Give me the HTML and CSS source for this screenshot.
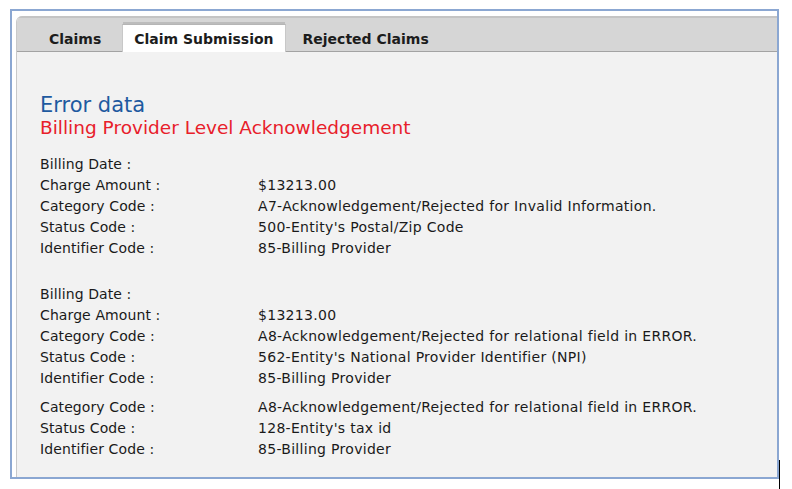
FILE: index.html
```html
<!DOCTYPE html>
<html lang="en">

<head>
    <meta charset="UTF-8">
    <meta name="viewport" content="width=device-width, initial-scale=1.0">
    <title>Claim Submission</title>
    <link rel="stylesheet" href="styles.css">
</head>

<body>

    <div class="frame">
        <div class="panel">

            <div class="tabbar">
                <span class="tab first">Claims</span>
                <span class="tab active">Claim Submission</span>
                <span class="tab">Rejected Claims</span>
            </div>

            <div class="content">
                <h2 class="error-title">Error data</h2>
                <h3 class="error-sub">Billing Provider Level Acknowledgement</h3>

                <div class="block">
                    <div class="row"><span class="lbl">Billing Date :</span><span class="val"></span></div>
                    <div class="row"><span class="lbl">Charge Amount :</span><span class="val">$13213.00</span></div>
                    <div class="row"><span class="lbl">Category Code :</span><span class="val">A7-Acknowledgement/Rejected for Invalid Information.</span></div>
                    <div class="row"><span class="lbl">Status Code :</span><span class="val">500-Entity's Postal/Zip Code</span></div>
                    <div class="row"><span class="lbl">Identifier Code :</span><span class="val">85-Billing Provider</span></div>
                </div>

                <div class="block">
                    <div class="row"><span class="lbl">Billing Date :</span><span class="val"></span></div>
                    <div class="row"><span class="lbl">Charge Amount :</span><span class="val">$13213.00</span></div>
                    <div class="row"><span class="lbl">Category Code :</span><span class="val">A8-Acknowledgement/Rejected for relational field in ERROR.</span></div>
                    <div class="row"><span class="lbl">Status Code :</span><span class="val">562-Entity's National Provider Identifier (NPI)</span></div>
                    <div class="row"><span class="lbl">Identifier Code :</span><span class="val">85-Billing Provider</span></div>
                </div>

                <div class="block sub">
                    <div class="row"><span class="lbl">Category Code :</span><span class="val">A8-Acknowledgement/Rejected for relational field in ERROR.</span></div>
                    <div class="row"><span class="lbl">Status Code :</span><span class="val">128-Entity's tax id</span></div>
                    <div class="row"><span class="lbl">Identifier Code :</span><span class="val">85-Billing Provider</span></div>
                </div>
            </div>

        </div>
    </div>

    <div class="edge"></div>

</body>

</html>
```

FILE: styles.css
```css
body {
    margin: 0;
    background-color: white;
    font-family: "DejaVu Sans", Verdana, sans-serif;
    color: #1a1a1a;
}

.frame {
    width: 769px;
    height: 470px;
    margin: 9px 0 0 10px;
    border: 2px solid #8ba7d2;
    padding: 5px 0 0 4px;
    box-sizing: border-box;
    background: white;
}

.panel {
    height: 100%;
    background: #f2f2f2;
    border-top-left-radius: 6px;
    border-left: 1px solid #c9c9c9;
    overflow: hidden;
}

.tabbar {
    height: 36px;
    background: #d6d6d6;
    border-top: 2px solid #c4c4c4;
    border-bottom: 1px solid #a3a3a3;
    box-sizing: border-box;
    display: flex;
    align-items: flex-end;
    gap: 6px;
    padding-left: 21px;
}

.tab {
    font-size: 14px;
    font-weight: bold;
    padding: 0 11px;
    height: 27px;
    line-height: 29px;
    color: #1c1c1c;
    margin-bottom: -1px;
}

.tab.first {
    margin-right: 4px;
}

.tab.active {
    background: white;
    border-top: 1px solid #b5b5b5;
    border-left: 1px solid #c8c8c8;
    border-right: 1px solid #c8c8c8;
    box-shadow: 0 -3px 0 -1px #bcbcbc;
}

.content {
    padding: 41px 0 0 23px;
    font-size: 14px;
}

.error-title {
    font-size: 21px;
    font-weight: normal;
    color: #1e5aa0;
    margin: 0;
    line-height: 24px;
}

.error-sub {
    font-size: 18.5px;
    font-weight: normal;
    color: #e8202a;
    margin: 0 0 15px 0;
    line-height: 22px;
}

.block {
    margin-bottom: 25px;
}

.block.sub {
    margin-top: -17px;
}

.row {
    display: flex;
    height: 21px;
    line-height: 21px;
}

.lbl {
    width: 218px;
    letter-spacing: 0.1px;
}

.val {
    letter-spacing: 0.3px;
}

.edge {
    position: absolute;
    left: 779px;
    top: 460px;
    width: 1px;
    height: 29px;
    background: black;
}
```
